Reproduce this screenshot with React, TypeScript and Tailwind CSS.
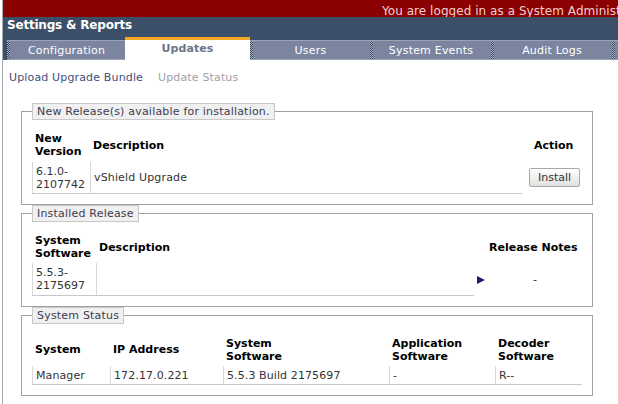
const font = { fontFamily: '"DejaVu Sans", Verdana, sans-serif' };

const tabs = [
  { name: "Configuration", width: "w-[118px]" },
  { name: "Updates", width: "w-[125px]", active: true },
  { name: "Users", width: "w-[120px]" },
  { name: "System Events", width: "w-[121px]" },
  { name: "Audit Logs", width: "w-[121px]" },
  { name: "", width: "w-[6px]" },
];

function Panel(props: { title: string; className: string; children: React.ReactNode }) {
  const { title, className, children } = props;
  return (
    <fieldset className={`w-[572px] border border-[#a0a0a0] ${className}`}>
      <legend className="ml-[10px] h-[17px] px-[4px] border border-[#c8c8c8] bg-[#f0f0f0] text-[11px] tracking-[0.2px] leading-[15px] text-[#3c3c50]">
        {title}
      </legend>
      {children}
    </fieldset>
  );
}

function Head(props: { className?: string; children: React.ReactNode }) {
  return (
    <div className={`text-[11px] leading-[13px] font-bold text-black ${props.className ?? ""}`}>
      {props.children}
    </div>
  );
}

export default function App() {
  return (
    <div style={font} className="w-[618px] h-[404px] overflow-hidden bg-white text-[11px] text-[#333]">
      <div className="ml-[2px] h-full border-l-[1px] border-[#a4acb8]">
        <div className="h-[17px] bg-[#8b0000] pl-[379px] text-[12px] tracking-[0.05px] leading-[22px] text-[#f0d0d0] whitespace-nowrap overflow-hidden">
          You are logged in as a System Administrator
        </div>

        <div className="h-[43px] bg-[#3b5068]">
          <div className="h-[20px] pl-[4px] text-[12px] tracking-[-0.2px] leading-[16px] font-bold text-white">Settings &amp; Reports</div>
          <div className="flex h-[23px] items-end pl-[4px]">
            {tabs.map((tab) =>
              tab.active ? (
                <div
                  key={tab.name}
                  className={`${tab.width} h-[23px] shrink-0 bg-white border-t-[3px] border-[#f5a623] text-center text-[11px] tracking-[0.1px] leading-[17px] font-bold text-[#6c7488]`}
                >
                  {tab.name}
                </div>
              ) : (
                <div
                  key={tab.name}
                  className={`${tab.width} flex h-[20px] shrink-0 bg-[#7c859f] border-t border-b border-[#9aa3b5] text-[11px] tracking-[0.2px] leading-[20px] text-white`}
                >
                  <div className="w-[3px] shrink-0 bg-[repeating-conic-gradient(#3b4a60_0_25%,#a8b0c0_0_50%)] bg-[length:2px_2px]" />
                  <div className="grow pr-[2px] text-center">{tab.name}</div>
                </div>
              ),
            )}
          </div>
        </div>

        <div className="flex gap-[15px] pl-[6px] pt-[10px] h-[43px] text-[11px] tracking-[0.15px] leading-[16px]">
          <span className="text-[#3f4f78]">Upload Upgrade Bundle</span>
          <span className="text-[#a0a0a8]">Update Status</span>
        </div>

        <div className="flex flex-col ml-[18px]">
          <Panel title="New Release(s) available for installation." className="h-[102px]">
            <div className="flex items-center ml-[10px] mt-[2px] h-[40px] pt-[6px]">
              <Head className="w-[58px] pl-[3px]">New<br />Version</Head>
              <Head className="w-[444px] pl-[3px]">Description</Head>
              <Head>Action</Head>
            </div>
            <div className="flex items-center ml-[10px]">
              <div className="flex items-center w-[490px] h-[32px] border-b border-[#c8c8c8] text-[11px] leading-[13px]">
                <div className="w-[59px] h-full flex items-center pl-[3px] border-l border-r border-[#d8d8d8]">
                  <span>6.1.0-<br />2107742</span>
                </div>
                <div className="pl-[3px] tracking-[0.15px]">vShield Upgrade</div>
              </div>
              <button type="button" className="ml-[7px] mb-[1px] w-[51px] h-[19px] border border-[#a8a8a8] rounded-[2px] bg-gradient-to-b from-white to-[#e0e0e0] text-[11px] leading-[15px] text-[#333]">
                Install
              </button>
            </div>
          </Panel>

          <Panel title="Installed Release" className="h-[102px]">
            <div className="flex items-center ml-[10px] mt-[1px] h-[40px] pt-[8px]">
              <Head className="w-[64px] pl-[3px]">System<br />Software</Head>
              <Head className="w-[391px] pl-[3px]">Description</Head>
              <Head className="ml-[2px]">Release Notes</Head>
            </div>
            <div className="flex items-center ml-[10px]">
              <div className="flex items-center w-[442px] h-[33px] border-b border-[#c8c8c8] text-[11px] leading-[13px]">
                <div className="w-[65px] h-full flex items-center pl-[3px] border-l border-r border-[#d8d8d8]">
                  <span>5.5.3-<br />2175697</span>
                </div>
              </div>
              <svg width="8" height="8" viewBox="0 0 8 8" className="ml-[3px] mt-[1px]">
                <path d="M0 0 L8 4 L0 8 Z" fill="#1c1c70" />
              </svg>
              <span className="ml-[48px] mt-[1px]">-</span>
            </div>
          </Panel>

          <Panel title="System Status" className="h-[89px]">
            <div className="flex items-center ml-[10px] mt-[2px] h-[40px] pt-[7px]">
              <Head className="w-[78px] pl-[3px]">System</Head>
              <Head className="w-[113px] pl-[3px]">IP Address</Head>
              <Head className="w-[166px] pl-[3px]">System<br />Software</Head>
              <Head className="w-[106px] pl-[3px]">Application<br />Software</Head>
              <Head className="pl-[3px]">Decoder<br />Software</Head>
            </div>
            <div className="flex items-center ml-[10px] w-[550px] h-[19px] border-b border-[#c8c8c8] leading-[13px] tracking-[0.1px]">
              <div className="w-[78px] h-full flex items-center pl-[3px] border-l border-[#d8d8d8]">Manager</div>
              <div className="w-[113px] h-full flex items-center pl-[3px] border-l border-[#d8d8d8]">172.17.0.221</div>
              <div className="w-[166px] h-full flex items-center pl-[3px] border-l border-[#d8d8d8]">5.5.3 Build 2175697</div>
              <div className="w-[106px] h-full flex items-center pl-[3px] border-l border-[#d8d8d8]">-</div>
              <div className="h-full flex items-center pl-[3px] border-l border-[#d8d8d8]">R--</div>
            </div>
          </Panel>
        </div>
      </div>
    </div>
  );
}
